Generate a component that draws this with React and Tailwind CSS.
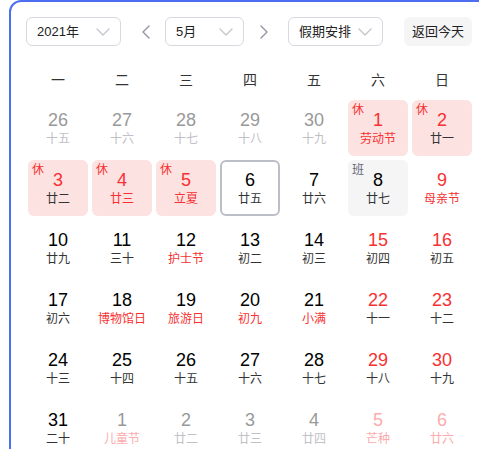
import React from "react";

const RED = "text-[#f73131]";
const DARK = "text-[#000]";
const LUN = "text-[#333]";
const GRAY_N = "text-[#999]";
const GRAY_L = "text-[#bfc1c6]";
const PINK = "text-[#fcacac]";

const rows = [
  [
    { d: 26, lu: "十五", n: GRAY_N, l: GRAY_L },
    { d: 27, lu: "十六", n: GRAY_N, l: GRAY_L },
    { d: 28, lu: "十七", n: GRAY_N, l: GRAY_L },
    { d: 29, lu: "十八", n: GRAY_N, l: GRAY_L },
    { d: 30, lu: "十九", n: GRAY_N, l: GRAY_L },
    { d: 1, lu: "劳动节", n: RED, l: RED, t: "rest" },
    { d: 2, lu: "廿一", n: RED, l: LUN, t: "rest" },
  ],
  [
    { d: 3, lu: "廿二", n: RED, l: LUN, t: "rest" },
    { d: 4, lu: "廿三", n: RED, l: RED, t: "rest" },
    { d: 5, lu: "立夏", n: RED, l: RED, t: "rest" },
    { d: 6, lu: "廿五", n: DARK, l: LUN, t: "today" },
    { d: 7, lu: "廿六", n: DARK, l: LUN },
    { d: 8, lu: "廿七", n: DARK, l: LUN, t: "work" },
    { d: 9, lu: "母亲节", n: RED, l: RED },
  ],
  [
    { d: 10, lu: "廿九", n: DARK, l: LUN },
    { d: 11, lu: "三十", n: DARK, l: LUN },
    { d: 12, lu: "护士节", n: DARK, l: RED },
    { d: 13, lu: "初二", n: DARK, l: LUN },
    { d: 14, lu: "初三", n: DARK, l: LUN },
    { d: 15, lu: "初四", n: RED, l: LUN },
    { d: 16, lu: "初五", n: RED, l: LUN },
  ],
  [
    { d: 17, lu: "初六", n: DARK, l: LUN },
    { d: 18, lu: "博物馆日", n: DARK, l: RED },
    { d: 19, lu: "旅游日", n: DARK, l: RED },
    { d: 20, lu: "初九", n: DARK, l: RED },
    { d: 21, lu: "小满", n: DARK, l: RED },
    { d: 22, lu: "十一", n: RED, l: LUN },
    { d: 23, lu: "十二", n: RED, l: LUN },
  ],
  [
    { d: 24, lu: "十三", n: DARK, l: LUN },
    { d: 25, lu: "十四", n: DARK, l: LUN },
    { d: 26, lu: "十五", n: DARK, l: LUN },
    { d: 27, lu: "十六", n: DARK, l: LUN },
    { d: 28, lu: "十七", n: DARK, l: LUN },
    { d: 29, lu: "十八", n: RED, l: LUN },
    { d: 30, lu: "十九", n: RED, l: LUN },
  ],
  [
    { d: 31, lu: "二十", n: DARK, l: LUN },
    { d: 1, lu: "儿童节", n: GRAY_N, l: PINK },
    { d: 2, lu: "廿二", n: GRAY_N, l: GRAY_L },
    { d: 3, lu: "廿三", n: GRAY_N, l: GRAY_L },
    { d: 4, lu: "廿四", n: GRAY_N, l: GRAY_L },
    { d: 5, lu: "芒种", n: PINK, l: PINK },
    { d: 6, lu: "廿六", n: PINK, l: PINK },
  ],
];

function Chevron() {
  return (
    <svg width="14" height="8" viewBox="0 0 14 8" fill="none">
      <path d="M1 1 L7 7 L13 1" stroke="#c4c7ce" strokeWidth="1.4" strokeLinecap="round" strokeLinejoin="round" />
    </svg>
  );
}

function Arrow({ dir }) {
  return (
    <svg width="8" height="14" viewBox="0 0 8 14" fill="none">
      <path
        d={dir === "left" ? "M7 1 L1 7 L7 13" : "M1 1 L7 7 L1 13"}
        stroke="#9195a3"
        strokeWidth="1.4"
        strokeLinecap="round"
        strokeLinejoin="round"
      />
    </svg>
  );
}

function Select({ label, w }) {
  return (
    <div className={`${w} h-[29px] border border-[#d7d9e0] rounded-[6px] flex items-center justify-between pl-[10px] pr-[10px] text-[13px] text-[#222] leading-none`}>
      <span>{label}</span>
      <Chevron />
    </div>
  );
}

function Cell({ c }) {
  let box = "";
  if (c.t === "rest") box = "bg-[#fde2e2] rounded-[6px]";
  else if (c.t === "work") box = "bg-[#f5f5f6] rounded-[6px]";
  else if (c.t === "today") box = "border-2 border-[#bdbfc8] rounded-[6px]";
  const pad = c.t === "today" ? "pt-[8px]" : "pt-[10px]";
  return (
    <div className={`relative h-[56px] flex flex-col items-center ${pad} ${box}`}>
      {c.t === "rest" && (
        <span className="absolute left-[4px] top-[3px] text-[12px] leading-[14px] text-[#f73131]">休</span>
      )}
      {c.t === "work" && (
        <span className="absolute left-[4px] top-[3px] text-[12px] leading-[14px] text-[#626675]">班</span>
      )}
      <span className={`text-[18px] leading-[20px] ${c.n}`}>{c.d}</span>
      <span className={`text-[12px] leading-[16px] mt-[1px] whitespace-nowrap ${c.l}`}>{c.lu}</span>
    </div>
  );
}

export default function App() {
  return (
    <div
      className="w-[479px] h-[449px] overflow-hidden bg-white"
      style={{ fontFamily: '"Liberation Sans", Arial, "Noto Sans CJK SC", sans-serif' }}
    >
      <div className="ml-[9px] w-[520px] h-[520px] border-2 border-[#4e6ef2] rounded-[12px] pt-[15px] pl-[15px]">
        <div className="flex items-center">
          <Select label="2021年" w="w-[95px]" />
          <div className="w-[44px] flex justify-center pl-[5px]">
            <Arrow dir="left" />
          </div>
          <Select label="5月" w="w-[79px]" />
          <div className="w-[44px] flex justify-center pr-[5px]">
            <Arrow dir="right" />
          </div>
          <Select label="假期安排" w="w-[95px]" />
          <div className="ml-[21px] w-[68px] h-[29px] rounded-[6px] bg-[#f5f5f6] flex items-center justify-center text-[13px] text-[#222] leading-none">
            返回今天
          </div>
        </div>
        <div className="ml-[2px] mt-[21px] grid grid-cols-[repeat(7,60px)] gap-x-[4px] h-[26px] items-center text-[14px] text-[#333]">
          {["一", "二", "三", "四", "五", "六", "日"].map((w) => (
            <div key={w} className="text-center">{w}</div>
          ))}
        </div>
        <div className="ml-[2px] mt-[7px] grid grid-cols-[repeat(7,60px)] gap-x-[4px] gap-y-[4px]">
          {rows.flat().map((c, i) => (
            <Cell key={i} c={c} />
          ))}
        </div>
      </div>
    </div>
  );
}
